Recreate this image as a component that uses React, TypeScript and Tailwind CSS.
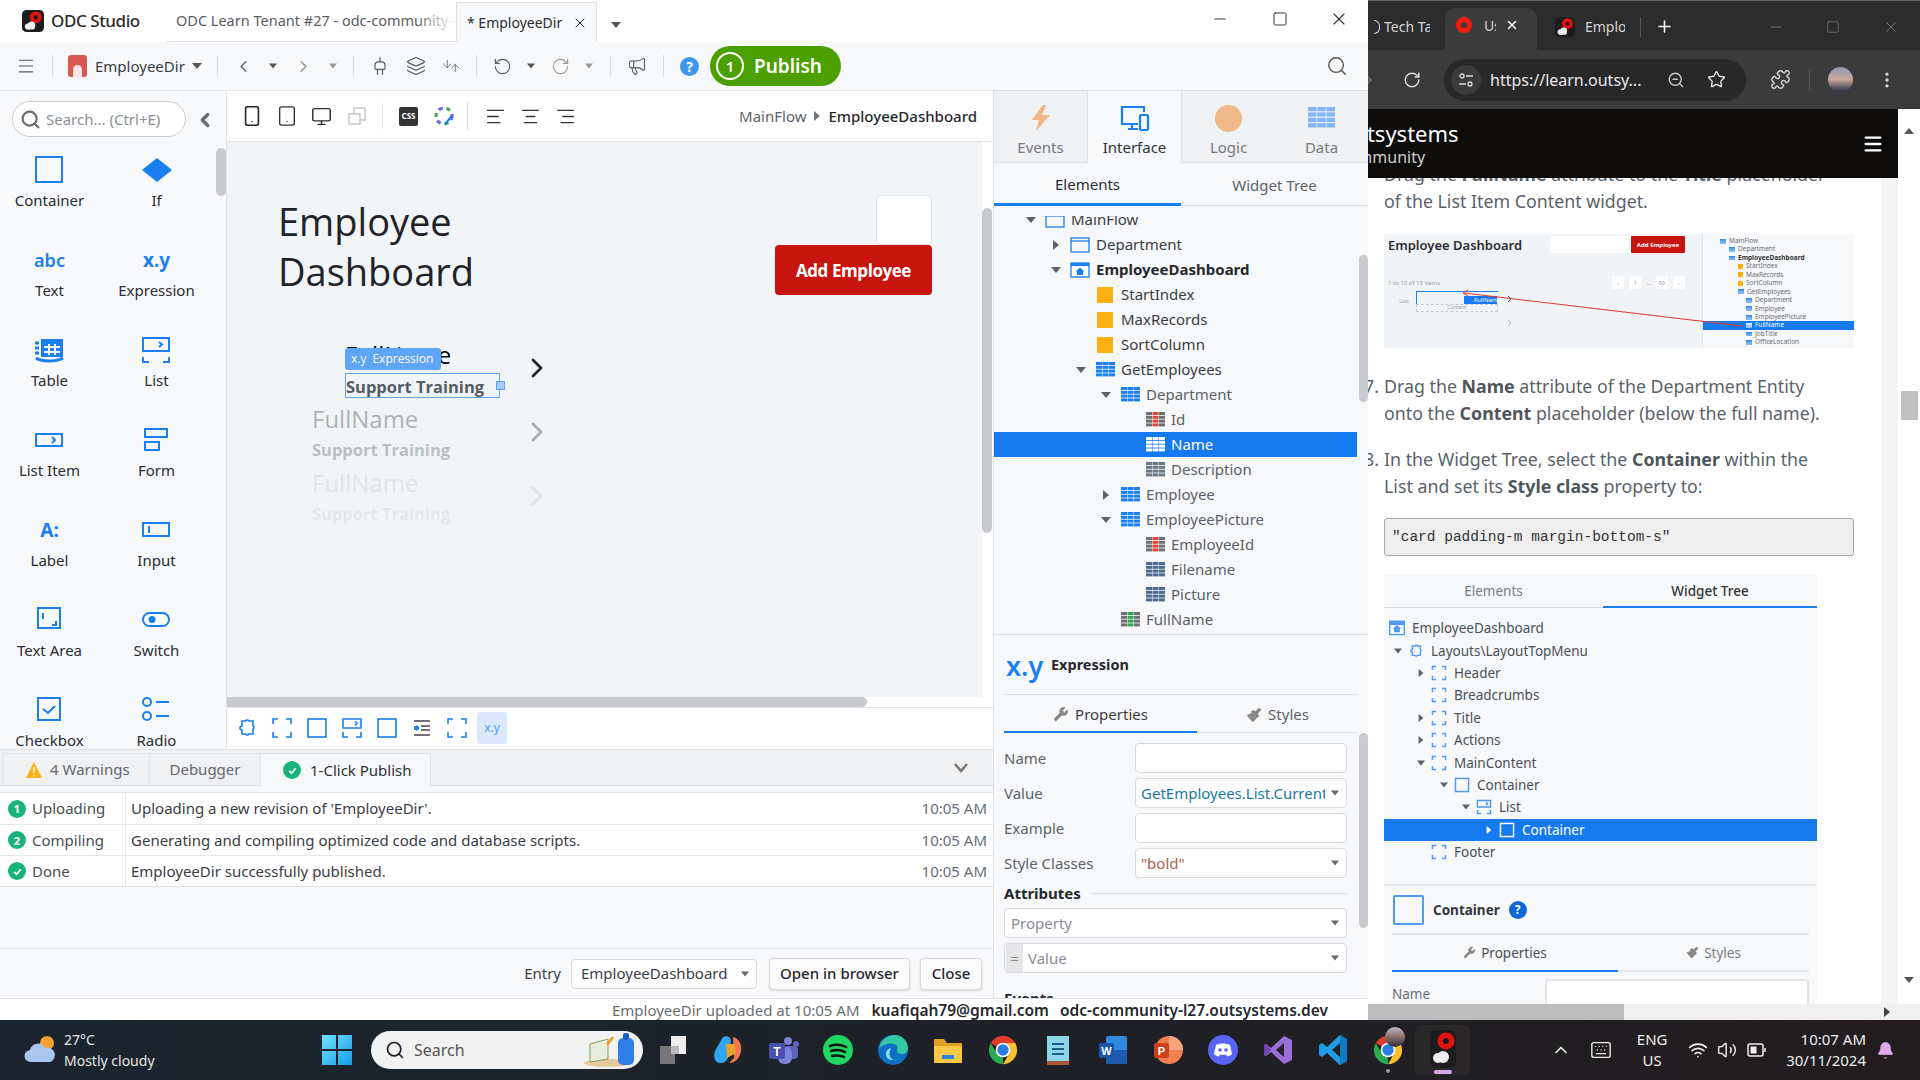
import type { ReactNode } from "react";
import {
  AlignCenter, AlignLeft, AlignRight, ArrowDown, ArrowRight, ArrowUp, Bell, ChevronLeft, ChevronRight, ChevronUp,
  Keyboard, Layers, Megaphone, Menu, Minus, Monitor, MoreVertical, Paintbrush, Plug, Plus, Puzzle,
  RotateCcw, RotateCw, Search, Smartphone, Square, Star, Tablet, Volume2, Wifi, Wrench, X, ZoomOut,
} from "lucide-react";

const BLUE = "#1a7ff0";

function Tri({ dir = "down", c = "#555", s = 5 }: { dir?: "down" | "right"; c?: string; s?: number }) {
  return (
    <svg width={s * 2} height={s * 2} viewBox="0 0 10 10" className="shrink-0">
      {dir === "down" ? <path d="M0 2h10L5 8z" fill={c} /> : <path d="M2 0v10l6-5z" fill={c} />}
    </svg>
  );
}

function OdcLogo({ size = 22 }: { size?: number }) {
  return (
    <svg width={size} height={size} viewBox="0 0 24 24" className="shrink-0">
      <rect width="24" height="24" rx="5" fill="#1d1d1f" />
      <circle cx="15" cy="8" r="6.5" fill="#e0140f" />
      <circle cx="15" cy="8" r="2.4" fill="#1d1d1f" />
      <circle cx="6.5" cy="18" r="3.4" fill="#eee" />
      <circle cx="10.5" cy="16.5" r="4" fill="#eee" />
      <rect x="5" y="17" width="9" height="4.4" rx="2" fill="#eee" />
    </svg>
  );
}

function Chrome({ size = 34 }: { size?: number }) {
  return (
    <svg width={size} height={size} viewBox="0 0 24 24">
      <path d="M3.34 7A10 10 0 0 1 20.66 7H12A5 5 0 0 0 7.67 9.5Z" fill="#e33b2e" />
      <path d="M20.66 7A10 10 0 0 1 12 22L16.33 14.5A5 5 0 0 0 12 7Z" fill="#fbc02d" />
      <path d="M12 22A10 10 0 0 1 3.34 7L7.67 14.5A5 5 0 0 0 12 17Z" fill="#2da94f" />
      <circle cx="12" cy="12" r="5.2" fill="#fff" />
      <circle cx="12" cy="12" r="4" fill="#2a7de1" />
    </svg>
  );
}

// ---------- widget palette icons ----------
function Pal({ children }: { children: ReactNode }) {
  return (
    <svg width="36" height="30" viewBox="0 0 36 30" fill="none" stroke={BLUE} strokeWidth="2">
      {children}
    </svg>
  );
}

const PALETTE: { label: string; icon: ReactNode }[] = [
  { label: "Container", icon: <Pal><rect x="4" y="2" width="26" height="25" /></Pal> },
  { label: "If", icon: <Pal><path d="M18 3l15 12-15 12L3 15z" fill={BLUE} stroke="none" /></Pal> },
  { label: "Text", icon: <span className="text-[18px] font-semibold text-[#1a7ff0]">abc</span> },
  { label: "Expression", icon: <span className="text-[19px] font-bold text-[#1a7ff0]">x.y</span> },
  { label: "Table", icon: (
    <Pal>
      <rect x="9" y="4" width="22" height="18" fill={BLUE} stroke="none" />
      <path d="M12 12h16M12 17h16M17 9v11M23 9v11" stroke="#f6f8fa" />
      <path d="M3 8h4M3 13h4M3 18h4M4 23c6 4 20 4 27 0" strokeWidth="3" />
    </Pal>
  ) },
  { label: "List", icon: (
    <Pal>
      <rect x="4" y="3" width="26" height="13" />
      <path d="M20 7l3 2.500-3 2.500M4 22v5h6M30 22v5h-6" />
    </Pal>
  ) },
  { label: "List Item", icon: <Pal><rect x="4" y="9" width="26" height="12" /><path d="M20 12l3 3-3 3" /></Pal> },
  { label: "Form", icon: <Pal><rect x="6" y="4" width="22" height="8" /><rect x="6" y="17" width="14" height="8" /></Pal> },
  { label: "Label", icon: <span className="text-[19px] font-bold text-[#1a7ff0]">A:</span> },
  { label: "Input", icon: <Pal><rect x="4" y="8" width="26" height="13" /><path d="M10 11v7" /></Pal> },
  { label: "Text Area", icon: <Pal><rect x="6" y="3" width="22" height="20" /><path d="M11 8v6M24 16v4h-4" /></Pal> },
  { label: "Switch", icon: <Pal><rect x="4" y="8" width="26" height="13" rx="6.500" /><circle cx="13" cy="14.500" r="3.500" fill={BLUE} stroke="none" /></Pal> },
  { label: "Checkbox", icon: <Pal><rect x="6" y="3" width="22" height="22" /><path d="M11 14l5 4 7-7" /></Pal> },
  { label: "Radio", icon: <Pal><circle cx="8" cy="7" r="4" /><circle cx="8" cy="21" r="4" /><path d="M17 7h13M17 21h13" /></Pal> },
];

function Palette() {
  return (
    <aside className="relative flex w-[227px] shrink-0 flex-col overflow-hidden border-r border-[#e0e2e5] bg-[#f6f8fa]">
      <div className="flex h-[59px] shrink-0 items-start pl-[12px] pt-[10px]">
        <div className="flex h-[36px] w-[174px] items-center gap-[5px] rounded-full border border-[#c9cbcf] bg-white pl-[7px] text-[15px] text-[#8b8f94]">
          <Search size={21} strokeWidth={2.5} className="text-[#6e6e6e]" />
          <span className="whitespace-nowrap">Search... (Ctrl+E)</span>
        </div>
        <ChevronLeft size={22} strokeWidth={3.5} className="ml-[8px] mt-[8px] text-[#666a6e]" />
      </div>
      <div className="-ml-[4px] grid grid-cols-[107px_107px]">
        {PALETTE.map((p) => (
          <div key={p.label} className="flex h-[90px] flex-col items-center">
            <div className="flex h-[40px] items-center justify-center">{p.icon}</div>
            <div className="h-[22px] text-[15px] leading-[20px] text-[#2b2d33]">{p.label}</div>
          </div>
        ))}
      </div>
      <div className="absolute right-0 top-[57px] h-[48px] w-[10px] rounded-full bg-[#c9cacd]" />
    </aside>
  );
}

// ---------- canvas ----------
function WidgetToolbarIcon({ children }: { children: ReactNode }) {
  return (
    <div className="flex h-[30px] w-[30px] shrink-0 items-center justify-center">
      <svg width="22" height="22" viewBox="0 0 22 22" fill="none" stroke={BLUE} strokeWidth="1.600">{children}</svg>
    </div>
  );
}

const DASHED = "M2 7V2h5M15 2h5v5M20 15v5h-5M7 20H2v-5";
const PUZZLE = "M6 4h3.500a2 2 0 0 1 3.500 0h4v4.500a2 2 0 0 1 0 3.500V17h-4a2 2 0 0 1-3.500 0H6v-4a2 2 0 0 1 0-4z";

function ListRow({ selected, fade }: { selected?: boolean; fade: string }) {
  return (
    <div className={`relative flex h-[64px] items-start justify-between ${fade}`}>
      <div className={selected ? "pl-[33px]" : ""}>
        <div className={`h-[34px] text-[24px] leading-[32px] ${selected ? "text-black" : "text-[#333]"}`}>FullName</div>
        <div className={`h-[25px] text-[16.500px] font-bold leading-[25px] text-[#555b63] ${selected ? "w-[155px] border border-[#5ea4f7] leading-[23px]" : ""}`}>
          Support Training
        </div>
      </div>
      <ChevronRight size={32} strokeWidth={2} className="mr-[-8px] mt-[13px] text-[#222]" />
      {selected && (
        <>
          <div className="absolute left-[33px] top-[9px] flex h-[22px] w-[96px] items-center gap-[6px] rounded-[3px] bg-[#5ea4f7] pl-[6px] text-[12px] text-white">
            <span>x.y</span>
            <span>Expression</span>
          </div>
          <div className="absolute left-[184px] top-[42px] h-[9px] w-[9px] border border-[#5ea4f7] bg-[#a9cdf9]" />
        </>
      )}
    </div>
  );
}

function CanvasColumn() {
  return (
    <div className="flex min-w-0 flex-1 flex-col bg-white">
      <div className="flex h-[51px] shrink-0 items-center border-b border-[#e0e2e5] pl-[7px] pr-[16px]">
        <div className="flex w-[35px] justify-center"><Smartphone size={22} strokeWidth={1.7} className="text-[#222]" /></div>
        <div className="flex w-[35px] justify-center"><Tablet size={22} strokeWidth={1.5} className="text-[#333]" /></div>
        <div className="flex w-[35px] justify-center"><Monitor size={21} strokeWidth={1.7} className="text-[#333]" /></div>
        <div className="flex w-[35px] justify-center">
          <svg width="20" height="20" viewBox="0 0 20 20" fill="none" stroke="#c4c6c9" strokeWidth="1.500"><path d="M7 8V2h11v12h-5" /><rect x="2" y="8" width="11" height="10" /></svg>
        </div>
        <div className="mx-[8px] h-[26px] w-px bg-[#e0e2e5]" />
        <div className="ml-[8px] flex h-[19px] w-[19px] items-center justify-center rounded-[2px] bg-[#333] text-[8px] font-bold text-white">CSS</div>
        <svg width="22" height="22" viewBox="0 0 22 22" className="ml-[15px]" fill="none" strokeWidth="3">
          <circle cx="11" cy="11" r="8" stroke="#34a853" strokeDasharray="4 4" />
          <circle cx="11" cy="11" r="8" stroke="#7b61ff" strokeDasharray="4 12" />
          <path d="M12 19l7-8" stroke="#1a7ff0" strokeWidth="2" />
        </svg>
        <div className="ml-[12px] h-[26px] w-px bg-[#d5d7da]" />
        <AlignLeft size={21} strokeWidth={1.5} className="ml-[17px] text-[#333]" />
        <AlignCenter size={21} strokeWidth={1.5} className="ml-[14px] text-[#333]" />
        <AlignRight size={21} strokeWidth={1.5} className="ml-[14px] text-[#333]" />
        <div className="ml-auto flex items-center gap-[6px] text-[15px]">
          <span className="text-[#5f6368]">MainFlow</span>
          <Tri dir="right" c="#777" s={5} />
          <span className="font-medium text-[#26282c]">EmployeeDashboard</span>
        </div>
      </div>

      <div className="flex min-h-0 flex-1">
        <div className="flex min-w-0 flex-1 flex-col">
          <div className="min-h-0 flex-1 overflow-hidden bg-[#f2f5f8] pl-[51px] pr-[50px] font-['Open_Sans',sans-serif]">
            <div className="flex items-start justify-between">
              <h1 className="pt-[54px] text-[38px] font-medium leading-[50px] text-[#1f2329]">
                Employee
                <br />
                Dashboard
              </h1>
              <div className="mt-[53px] flex w-[157px] flex-col items-end">
                <div className="h-[50px] w-[56px] rounded-[4px] border border-[#dfe2e5] bg-white" />
                <div className="flex h-[50px] w-[157px] items-center justify-center rounded-[4px] bg-[#c8140f] pt-[1px] text-[17px] font-bold tracking-tight text-white">
                  Add Employee
                </div>
              </div>
            </div>
            <div className="ml-[34px] mt-[43px] w-[233px]">
              <ListRow selected fade="" />
              <ListRow fade="opacity-35" />
              <ListRow fade="opacity-[0.08]" />
            </div>
          </div>
          <div className="h-[10px] shrink-0 bg-white">
            <div className="h-[10px] w-[640px] rounded-r-full bg-[#c9cacd]" />
          </div>
        </div>
        <div className="w-[11px] shrink-0 bg-white pt-[66px]">
          <div className="h-[325px] w-[10px] rounded-full bg-[#c9cacd]" />
        </div>
      </div>

      <div className="flex h-[42px] shrink-0 items-center gap-[5px] border-t border-[#e0e2e5] pb-[2px] pl-[5px]">
        <WidgetToolbarIcon><path d={PUZZLE} /></WidgetToolbarIcon>
        <WidgetToolbarIcon><path d={DASHED} /></WidgetToolbarIcon>
        <WidgetToolbarIcon><rect x="2" y="2" width="18" height="18" /></WidgetToolbarIcon>
        <WidgetToolbarIcon><path d="M2 2h18v9H2zM14 4.500l2 2-2 2M2 15v5h5M20 15v5h-5" /></WidgetToolbarIcon>
        <WidgetToolbarIcon><rect x="2" y="2" width="18" height="18" /></WidgetToolbarIcon>
        <WidgetToolbarIcon><path d="M3 4h16M10 9h9M10 13h9M3 18h16" stroke="#444" /><circle cx="5.500" cy="11" r="2.500" fill={BLUE} stroke="none" /></WidgetToolbarIcon>
        <WidgetToolbarIcon><path d={DASHED} /></WidgetToolbarIcon>
        <div className="flex h-[32px] w-[30px] items-center justify-center rounded-[3px] bg-[#dbe9fb] text-[12px] text-[#4e9bf3]">x.y</div>
      </div>
    </div>
  );
}

// ---------- bottom panel ----------
function Dot({ children }: { children: ReactNode }) {
  return (
    <span className="flex h-[18px] w-[18px] shrink-0 items-center justify-center rounded-full bg-[#19b47a] text-[11px] font-bold leading-none text-white">
      {children}
    </span>
  );
}

const Check = () => (
  <svg width="11" height="11" viewBox="0 0 12 12" fill="none" stroke="#fff" strokeWidth="1.800"><path d="M2.500 6.500l2.500 2.500 4.500-5.500" /></svg>
);

const LOG_ROWS: { dot: ReactNode; step: string; text: string }[] = [
  { dot: "1", step: "Uploading", text: "Uploading a new revision of 'EmployeeDir'." },
  { dot: "2", step: "Compiling", text: "Generating and compiling optimized code and database scripts." },
  { dot: <Check />, step: "Done", text: "EmployeeDir successfully published." },
];

function BottomPanel() {
  return (
    <div className="flex h-[248px] shrink-0 flex-col bg-[#f6f8fa] text-[15px]">
      <div className="flex h-[36px] shrink-0 items-end border-b border-[#dfe1e4] bg-[#f0f1f3] pl-[2px]">
        <div className="flex h-[32px] w-[148px] items-center gap-[7px] border-t border-r border-l border-[#e4e6e8] pl-[22px] text-[#64686d]">
          <svg width="18" height="18" viewBox="0 0 18 18"><path d="M9 1l8 16H1z" fill="#ffb20f" /><path d="M9 6v6M9 14v1.500" stroke="#fff" strokeWidth="1.500" /></svg>
          4 Warnings
        </div>
        <div className="flex h-[32px] w-[111px] items-center justify-center border-t border-r border-[#e4e6e8] text-[#64686d]">Debugger</div>
        <div className="-mb-px flex h-[33px] w-[170px] items-center gap-[9px] border-t border-r border-[#dfe1e4] bg-[#f6f8fa] pl-[22px] text-[#2f3237]">
          <Dot><Check /></Dot>
          1-Click Publish
        </div>
        <svg width="16" height="16" viewBox="0 0 16 16" fill="none" stroke="#777" strokeWidth="2.500" className="mb-[9px] ml-[522px]"><path d="M2 4l6 7 6-7" /></svg>
      </div>
      <div className="mt-[6px] border-t border-b border-[#dfe1e4] bg-white">
        {LOG_ROWS.map((r, i) => (
          <div key={r.step} className={`flex h-[31px] items-center ${i > 0 ? "border-t border-[#e4e6e8]" : ""}`}>
            <div className="flex h-full w-[126px] shrink-0 items-center gap-[6px] border-r border-[#e4e6e8] pl-[8px] text-[#4a4e54]">
              <Dot>{r.dot}</Dot>
              {r.step}
            </div>
            <div className="pl-[5px] text-[#3c4046]">{r.text}</div>
            <div className="ml-auto pr-[6px] text-[#6a6e73]">10:05 AM</div>
          </div>
        ))}
      </div>
      <div className="mt-auto flex h-[50px] shrink-0 items-center justify-end border-t border-[#e0e2e5] pr-[11px]">
        <span className="mr-[10px] text-[#3c4046]">Entry</span>
        <div className="flex h-[30px] w-[186px] items-center justify-between rounded-[4px] border border-[#d8dadd] bg-white pl-[9px] pr-[7px] text-[#3c4046]">
          EmployeeDashboard
          <Tri c="#666" s={4} />
        </div>
        <div className="ml-[12px] flex h-[32px] w-[141px] items-center justify-center rounded-[4px] border border-[#d8dadd] bg-[#fbfbfc] font-medium text-[#26282c] shadow-sm">Open in browser</div>
        <div className="ml-[10px] flex h-[32px] w-[62px] items-center justify-center rounded-[4px] border border-[#d8dadd] bg-[#fbfbfc] font-medium text-[#26282c] shadow-sm">Close</div>
      </div>
    </div>
  );
}

// ---------- right panel ----------
function GridIcon({ c = BLUE, mid, w = 19 }: { c?: string; mid?: string; w?: number }) {
  return (
    <svg width={w} height={(w * 15) / 19} viewBox="0 0 19 15" className="shrink-0">
      {[0, 1, 2, 3].flatMap((r) =>
        [0, 1, 2].map((k) => (
          <rect key={`${r}-${k}`} x={k * 6.5} y={r * 3.8} width="6" height="3" fill={k === 1 && mid ? mid : c} />
        ))
      )}
    </svg>
  );
}

const FolderIcon = () => (
  <svg width="20" height="16" viewBox="0 0 20 16" fill="none" stroke={BLUE} strokeWidth="1.300" className="shrink-0"><rect x="1" y="1" width="18" height="14" /><path d="M1 4h18" /></svg>
);
const HomeIcon = () => (
  <svg width="20" height="16" viewBox="0 0 20 16" className="shrink-0"><rect x="1" y="1" width="18" height="14" fill="#fff" stroke={BLUE} strokeWidth="1.300" /><path d="M1 1h18v3H1z" fill={BLUE} /><path d="M10 5.500l4.500 4h-1.500v3.500H7V9.500H5.500z" fill={BLUE} /></svg>
);
const VarIcon = () => <div className="h-[16px] w-[16px] shrink-0 bg-[#ffb20f]" />;

const PAD = ["pl-[30px]", "pl-[55px]", "pl-[80px]", "pl-[105px]", "pl-[130px]"];

const TREE: { lv: number; arrow?: "down" | "right"; icon: ReactNode; label: string; bold?: boolean; dim?: boolean; sel?: boolean }[] = [
  { lv: 0, arrow: "down", icon: <FolderIcon />, label: "MainFlow" },
  { lv: 1, arrow: "right", icon: <FolderIcon />, label: "Department" },
  { lv: 1, arrow: "down", icon: <HomeIcon />, label: "EmployeeDashboard", bold: true },
  { lv: 2, icon: <VarIcon />, label: "StartIndex" },
  { lv: 2, icon: <VarIcon />, label: "MaxRecords" },
  { lv: 2, icon: <VarIcon />, label: "SortColumn" },
  { lv: 2, arrow: "down", icon: <GridIcon />, label: "GetEmployees" },
  { lv: 3, arrow: "down", icon: <GridIcon />, label: "Department", dim: true },
  { lv: 4, icon: <GridIcon c="#6d6f73" mid="#e0483b" />, label: "Id", dim: true },
  { lv: 4, icon: <GridIcon c="#fff" />, label: "Name", sel: true },
  { lv: 4, icon: <GridIcon c="#6d7785" />, label: "Description", dim: true },
  { lv: 3, arrow: "right", icon: <GridIcon />, label: "Employee", dim: true },
  { lv: 3, arrow: "down", icon: <GridIcon />, label: "EmployeePicture", dim: true },
  { lv: 4, icon: <GridIcon c="#6d6f73" mid="#e0483b" />, label: "EmployeeId", dim: true },
  { lv: 4, icon: <GridIcon c="#4b6a94" />, label: "Filename", dim: true },
  { lv: 4, icon: <GridIcon c="#4b6a94" />, label: "Picture", dim: true },
  { lv: 3, icon: <GridIcon c="#6d6f73" mid="#2fa84f" />, label: "FullName", dim: true },
];

function Field({ label, value, valueClass, caret }: { label: string; value?: string; valueClass?: string; caret?: boolean }) {
  return (
    <div className="mb-[5px] flex h-[30px] items-center">
      <div className="w-[131px] shrink-0 text-[#5d6166]">{label}</div>
      <div className="flex h-[30px] w-[212px] items-center justify-between overflow-hidden rounded-[4px] border border-[#d8dadd] bg-white pl-[5px] pr-[7px]">
        <span className={`w-[184px] overflow-hidden whitespace-nowrap ${valueClass ?? ""}`}>{value}</span>
        {caret && <Tri c="#666" s={4} />}
      </div>
    </div>
  );
}

function RightTab({ label, active, children }: { label: string; active?: boolean; children: ReactNode }) {
  return (
    <div className={`flex flex-1 flex-col items-center border-b border-[#e0e2e5] pt-[12px] ${active ? "border-x border-b-0 bg-[#f7f8fa] text-[#30333a]" : "bg-[#f0f1f3] text-[#767a80]"}`}>
      <div className="flex h-[30px] items-center">{children}</div>
      <div className="mt-[3px] text-[15px]">{label}</div>
    </div>
  );
}

function RightPanel() {
  return (
    <aside className="relative flex w-[375px] shrink-0 flex-col overflow-hidden border-l border-[#e0e2e5] bg-[#f7f8fa] text-[15px]">
      <div className="flex h-[72px] shrink-0">
        <RightTab label="Events"><svg width="22" height="28" viewBox="0 0 22 28"><path d="M13 1L2 16h7l-3 11 14-16h-8l4-10z" fill="#f2b682" /></svg></RightTab>
        <RightTab label="Interface" active>
          <svg width="30" height="27" viewBox="0 0 30 27" fill="none" stroke={BLUE} strokeWidth="2.200"><path d="M18 19H2V2h22v5M8 24h10M12 19v5" /><rect x="20" y="10" width="8" height="15" rx="1" /></svg>
        </RightTab>
        <RightTab label="Logic"><div className="h-[27px] w-[27px] rounded-full bg-[#eeb888]" /></RightTab>
        <RightTab label="Data"><GridIcon c="#83b5f5" w={27} /></RightTab>
      </div>
      <div className="flex h-[43px] shrink-0 border-b border-[#dfe1e4]">
        <div className="-mb-px flex w-[187px] items-center justify-center border-b-[3px] border-[#1a7ff0] pt-[3px] text-[#2b2d33]">Elements</div>
        <div className="flex flex-1 items-center justify-center pt-[3px] text-[#5f6368]">Widget Tree</div>
      </div>
      <div className="relative mt-[10px] h-[419px] shrink-0 overflow-hidden border-b border-[#dfe1e4]">
        <div className="-mt-[9px] -translate-x-[1px]">
          {TREE.map((t, i) => (
            <div
              key={i}
              className={`flex h-[25px] items-center ${PAD[t.lv]} ${t.sel ? "mr-[10px] bg-[#1579f0] text-white" : t.dim ? "mr-[10px] text-[#5c6167]" : "mr-[10px] text-[#3a3d43]"}`}
            >
              <div className="flex w-[16px] shrink-0 justify-center">{t.arrow && <Tri dir={t.arrow} c="#5f6265" s={5} />}</div>
              <div className="ml-[6px] flex w-[20px] shrink-0 justify-center">{t.icon}</div>
              <span className={`ml-[6px] ${t.bold ? "font-bold text-[#26282c]" : ""}`}>{t.label}</span>
            </div>
          ))}
        </div>
        <div className="absolute right-0 top-[39px] h-[147px] w-[9px] rounded-full bg-[#c9cacd]" />
      </div>

      <div className="flex h-[59px] shrink-0 items-center pl-[12px] pt-[1px]">
        <span className="w-[45px] text-[27px] font-semibold leading-none text-[#1a7ff0]">x.y</span>
        <span className="text-[14.500px] font-bold text-[#26282c]">Expression</span>
      </div>
      <div className="mx-[10px] flex h-[39px] shrink-0 border-t border-b border-[#dfe1e4] pt-[2px]">
        <div className="-mb-px flex w-[193px] items-center justify-center gap-[6px] border-b-[2px] border-[#1a7ff0] text-[#3a3d43]">
          <Wrench size={16} fill="#888" strokeWidth={1} className="text-[#888]" />
          Properties
        </div>
        <div className="flex flex-1 items-center justify-center gap-[6px] text-[#5f6368]">
          <Paintbrush size={16} fill="#888" strokeWidth={1} className="text-[#888]" />
          Styles
        </div>
      </div>
      <div className="relative flex-1 px-[10px] pt-[10px]">
        <Field label="Name" />
        <Field label="Value" value="GetEmployees.List.Current" valueClass="text-[#1b7aa0]" caret />
        <Field label="Example" />
        <Field label="Style Classes" value={'"bold"'} valueClass="text-[#b0604f]" caret />
        <div className="mt-[5px] flex h-[20px] items-center gap-[10px] font-bold text-[#26282c]">
          Attributes
          <div className="h-px w-[257px] bg-[#dfe1e4]" />
        </div>
        <div className="mt-[5px] flex h-[30px] w-[343px] items-center justify-between rounded-[4px] border border-[#d8dadd] bg-white pl-[6px] pr-[7px] text-[#8a8e93]">
          Property
          <Tri c="#666" s={4} />
        </div>
        <div className="mt-[5px] flex h-[30px] w-[343px] items-center justify-between overflow-hidden rounded-[4px] border border-[#d8dadd] bg-white pr-[7px] text-[#8a8e93]">
          <span className="flex items-center">
            <span className="ml-[1px] flex h-[28px] w-[17px] items-center justify-center bg-[#e4e5e7] text-[#888]">=</span>
            <span className="ml-[5px]">Value</span>
          </span>
          <Tri c="#666" s={4} />
        </div>
        <div className="mt-[15px] flex h-[20px] items-center gap-[10px] font-bold text-[#26282c]">
          Events
          <div className="h-px flex-1 bg-[#dfe1e4]" />
        </div>
        <div className="absolute right-0 top-0 h-[195px] w-[9px] rounded-full bg-[#c9cacd]" />
      </div>
    </aside>
  );
}

// ---------- studio ----------
function Slot({ w, children }: { w: string; children: ReactNode }) {
  return <div className={`flex shrink-0 items-center justify-center ${w}`}>{children}</div>;
}
const Sep = () => <div className="h-[22px] w-px shrink-0 bg-[#d9dbde]" />;

function Studio() {
  return (
    <div className="flex w-[1368px] shrink-0 flex-col overflow-hidden bg-white font-['Noto_Sans',sans-serif]">
      <div className="flex h-[42px] shrink-0 items-end">
        <div className="flex h-[42px] w-[166px] shrink-0 items-center pl-[22px]">
          <OdcLogo />
          <span className="ml-[7px] text-[17px] font-medium tracking-tight text-[#2c2c2c]">ODC Studio</span>
        </div>
        <div className="relative flex h-[42px] w-[290px] items-center overflow-hidden whitespace-nowrap border-b border-[#dfe1e4] pl-[10px] text-[14.500px] text-[#5a5d62]">
          ODC Learn Tenant #27 - odc-community-l27
          <div className="absolute right-0 top-0 h-full w-[40px] bg-gradient-to-r from-transparent to-white" />
        </div>
        <div className="flex h-[40px] w-[141px] items-center gap-[10px] border-x border-t border-[#dfe1e4] bg-[#f6f8fa] pl-[10px] text-[14px] text-[#2b2d33]">
          * EmployeeDir
          <X size={16} strokeWidth={1.5} />
        </div>
        <div className="mb-[12px] ml-[14px]"><Tri c="#555" s={5} /></div>
        <div className="ml-auto flex h-[42px] items-center pb-[4px] text-[#333]">
          <Slot w="w-[60px]"><Minus size={18} strokeWidth={1.3} /></Slot>
          <Slot w="w-[60px]"><Square size={16} strokeWidth={1.5} /></Slot>
          <Slot w="w-[58px]"><X size={20} strokeWidth={1.3} /></Slot>
        </div>
      </div>

      <div className="flex h-[49px] shrink-0 items-center border-b border-[#e0e2e5] bg-[#f6f8fa] text-[#55585c]">
        <Slot w="w-[52px]"><Menu size={20} strokeWidth={1.3} /></Slot>
        <Sep />
        <div className="ml-[15px] flex h-[22px] w-[19px] shrink-0 items-end justify-center rounded-[3px] bg-[#d9584f]">
          <div className="h-[12px] w-[9px] rounded-t-full bg-[#f7e6e3]" />
        </div>
        <span className="ml-[8px] w-[97px] shrink-0 text-[15px] text-[#3a3d43]">EmployeeDir</span>
        <Tri c="#555" s={5} />
        <div className="ml-[15px]"><Sep /></div>
        <Slot w="w-[51px]"><ChevronLeft size={19} strokeWidth={1.5} /></Slot>
        <Tri c="#555" s={4} />
        <Slot w="w-[52px]"><ChevronRight size={19} strokeWidth={1.5} className="text-[#888]" /></Slot>
        <Tri c="#999" s={4} />
        <Slot w="w-[16px]"><span /></Slot>
        <Sep />
        <Slot w="w-[52px]"><Plug size={20} strokeWidth={1.4} className="rotate-180" /></Slot>
        <Slot w="w-[20px]"><Layers size={20} strokeWidth={1.4} /></Slot>
        <div className="ml-[17px] flex w-[18px]"><ArrowDown size={14} strokeWidth={1.5} className="-ml-[2px]" /><ArrowUp size={14} strokeWidth={1.5} className="-ml-[5px] mt-[4px]" /></div>
        <Slot w="w-[15px]"><span /></Slot>
        <Sep />
        <Slot w="w-[50px]"><RotateCcw size={19} strokeWidth={1.4} /></Slot>
        <Tri c="#555" s={4} />
        <Slot w="w-[50px]"><RotateCw size={19} strokeWidth={1.4} className="text-[#999]" /></Slot>
        <Tri c="#999" s={4} />
        <Slot w="w-[17px]"><span /></Slot>
        <Sep />
        <Slot w="w-[52px]"><Megaphone size={20} strokeWidth={1.3} /></Slot>
        <Sep />
        <div className="ml-[16px] flex h-[19px] w-[19px] shrink-0 items-center justify-center rounded-full bg-[#3f97ef] text-[14px] font-bold text-white">?</div>
        <div className="ml-[11px] flex h-[40px] w-[131px] shrink-0 items-center rounded-full bg-[#4ba000] pl-[6px] text-[19px] font-semibold text-white">
          <span className="flex h-[28px] w-[28px] items-center justify-center rounded-full border-2 border-white text-[15px]">1</span>
          <span className="ml-[10px]">Publish</span>
        </div>
        <Search size={22} strokeWidth={1.5} className="ml-auto mr-[20px] text-[#555]" />
      </div>

      <div className="flex min-h-0 flex-1">
        <div className="flex w-[993px] shrink-0 flex-col">
          <div className="flex min-h-0 flex-1">
            <Palette />
            <CanvasColumn />
          </div>
          <div className="border-t border-[#e0e2e5]" />
          <BottomPanel />
        </div>
        <RightPanel />
      </div>

      <div className="flex h-[22px] shrink-0 items-center justify-end border-t border-[#e0e2e5] bg-white pr-[40px] text-[15px] leading-[18px]">
        <span className="text-[#6a6e73]">EmployeeDir uploaded at 10:05 AM</span>
        <span className="ml-[12px] text-[15.500px] font-semibold text-[#26282c]">kuafiqah79@gmail.com</span>
        <span className="ml-[11px] text-[15.500px] font-semibold text-[#26282c]">odc-community-l27.outsystems.dev</span>
      </div>
    </div>
  );
}

// ---------- browser ----------
const MINI_TREE: { t: string; lv: number; kind?: string }[] = [
  { t: "MainFlow", lv: 0 },
  { t: "Department", lv: 1 },
  { t: "EmployeeDashboard", lv: 1, kind: "bold" },
  { t: "StartIndex", lv: 2, kind: "var" },
  { t: "MaxRecords", lv: 2, kind: "var" },
  { t: "SortColumn", lv: 2, kind: "var" },
  { t: "GetEmployees", lv: 2, kind: "grid" },
  { t: "Department", lv: 3, kind: "grid" },
  { t: "Employee", lv: 3, kind: "grid" },
  { t: "EmployeePicture", lv: 3, kind: "grid" },
  { t: "FullName", lv: 3, kind: "sel" },
  { t: "JobTitle", lv: 3, kind: "grid" },
  { t: "OfficeLocation", lv: 3, kind: "grid" },
];
const MINI_PAD = ["pl-[17px]", "pl-[26px]", "pl-[35px]", "pl-[43px]"];

function DragScreenshot() {
  return (
    <div className="relative mt-[19px] flex h-[114px] w-[470px] overflow-hidden bg-[#f1f4f7]">
      <div className="w-[319px] shrink-0 border-r border-[#e1e3e6]">
        <div className="flex h-[20px] items-center pl-[4px] pr-[17px] pt-[1px]">
          <span className="text-[13px] font-semibold leading-[18px] text-[#2b2d33]">Employee Dashboard</span>
          <div className="ml-auto h-[17px] w-[81px] bg-white" />
          <div className="flex h-[17px] w-[54px] items-center justify-center rounded-[1px] bg-[#c8140f] text-[6px] font-bold leading-none text-white">Add Employee</div>
        </div>
        <div className="mt-[22px] flex h-[13px] items-center pl-[4px] pr-[17px] text-[6px] leading-none text-[#9a9da1]">
          1 to 10 of 15 items
          <div className="ml-auto flex items-center gap-[5px]">
            <span className="flex h-[13px] w-[12px] items-center justify-center bg-white">‹</span>
            <span className="flex h-[13px] w-[12px] items-center justify-center bg-white">1</span>
            <span>...</span>
            <span className="flex h-[13px] w-[12px] items-center justify-center bg-white">50</span>
            <span className="flex h-[13px] w-[12px] items-center justify-center bg-white">›</span>
          </div>
        </div>
        <div className="ml-[8px] mt-[2px] flex items-start text-[5px] leading-none text-[#a5a8ab]">
          <span className="mt-[8px] w-[24px] text-center">Last</span>
          <div className="w-[82px]">
            <div className="h-[13px] border-t border-l border-[#1a7ff0]" />
            <div className="h-[8px] border border-dashed border-[#c8cacd] text-center">Content</div>
          </div>
        </div>
      </div>
      <div className="flex-1 bg-[#f6f8fa] text-[6.500px] leading-[8.450px] text-[#6a6e73]">
        <div className="pt-[3px]">
          {MINI_TREE.map((r, i) => (
            <div key={i} className={`flex h-[8.450px] items-center gap-[3px] ${MINI_PAD[r.lv]} ${r.kind === "sel" ? "bg-[#1579f0] text-white" : ""} ${r.kind === "bold" ? "font-bold text-[#333]" : ""}`}>
              {r.kind === "var" ? <div className="h-[5px] w-[5px] bg-[#ffb20f]" /> : <GridIcon w={6} c={r.kind === "sel" ? "#fff" : BLUE} />}
              {r.t}
            </div>
          ))}
        </div>
      </div>
      <div className="absolute left-[80px] top-[62px] flex h-[8px] w-[33px] items-center bg-[#1579f0] pl-[10px] text-[6px] text-white">FullName</div>
      <svg width="470" height="114" viewBox="0 0 470 114" className="absolute left-0 top-0" fill="none">
        <path d="M80 59L358 92" stroke="#e5392c" strokeWidth="1" />
        <path d="M84 56l-5 3 5 3" stroke="#e5392c" strokeWidth="1" />
        <path d="M124 62l3 3-3 3" stroke="#555" />
        <path d="M124 86l3 3-3 3" stroke="#bbb" />
      </svg>
    </div>
  );
}

type MiniRow = { t: string; pad: string; arrow?: "down" | "right"; icon: "home" | "puzzle" | "dash" | "box" | "list"; sel?: boolean };
const WT: MiniRow[] = [
  { t: "EmployeeDashboard", pad: "-ml-[16px]", icon: "home" },
  { t: "Layouts\\LayoutTopMenu", pad: "pl-[3px]", arrow: "down", icon: "puzzle" },
  { t: "Header", pad: "pl-[26px]", arrow: "right", icon: "dash" },
  { t: "Breadcrumbs", pad: "pl-[26px]", icon: "dash" },
  { t: "Title", pad: "pl-[26px]", arrow: "right", icon: "dash" },
  { t: "Actions", pad: "pl-[26px]", arrow: "right", icon: "dash" },
  { t: "MainContent", pad: "pl-[26px]", arrow: "down", icon: "dash" },
  { t: "Container", pad: "pl-[49px]", arrow: "down", icon: "box" },
  { t: "List", pad: "pl-[71px]", arrow: "down", icon: "list" },
  { t: "Container", pad: "pl-[94px]", arrow: "right", icon: "box", sel: true },
  { t: "Footer", pad: "pl-[26px]", icon: "dash" },
];

function WtIcon({ kind, sel }: { kind: MiniRow["icon"]; sel?: boolean }) {
  const c = sel ? "#fff" : "#4e9bf3";
  return (
    <svg width="16" height="16" viewBox="0 0 22 22" fill="none" stroke={c} strokeWidth="2" className="shrink-0">
      {kind === "home" && <><rect x="1" y="2" width="20" height="18" fill="#fff" /><path d="M1 2h20v4H1z" fill={c} /><path d="M11 7l6 5h-2v5H7v-5H5z" fill={c} stroke="none" /></>}
      {kind === "puzzle" && <path d={PUZZLE} />}
      {kind === "dash" && <path d={DASHED} />}
      {kind === "box" && <rect x="2" y="2" width="18" height="18" />}
      {kind === "list" && <path d="M2 2h18v9H2zM14 4.500l2 2-2 2M2 15v5h5M20 15v5h-5" />}
    </svg>
  );
}

function WidgetTreeShot() {
  return (
    <div className="mt-[19px] h-[430px] w-[433px] overflow-hidden bg-[#f6f8fa] text-[13.500px] leading-[20px] text-[#4c5056]">
      <div className="flex h-[33px] border-b border-[#dcdee1]">
        <div className="flex w-[219px] items-center justify-center text-[#7a7e83]">Elements</div>
        <div className="-mb-px flex flex-1 items-center justify-center border-b-2 border-[#1a7ff0] font-medium text-[#33363b]">Widget Tree</div>
      </div>
      <div className="overflow-hidden pt-[9px]">
        {WT.map((r, i) => (
          <div key={i} className={`flex h-[22.400px] items-center ${r.pad} ${r.sel ? "bg-[#1579f0] text-white" : ""}`}>
            <div className="flex w-[21px] shrink-0 justify-center">{r.arrow && <Tri dir={r.arrow} s={4} c={r.sel ? "#fff" : "#5f6265"} />}</div>
            <WtIcon kind={r.icon} sel={r.sel} />
            <span className="ml-[7px]">{r.t}</span>
          </div>
        ))}
      </div>
      <div className="mt-[21px] border-t-2 border-[#e6e8ea] px-[8px]">
        <div className="flex h-[49px] items-center border-b-2 border-[#e6e8ea] pl-[1px]">
          <div className="h-[30px] w-[31px] rounded-[2px] border-2 border-[#4e9bf3]" />
          <span className="ml-[9px] font-bold text-[#33363b]">Container</span>
          <span className="ml-[9px] flex h-[18px] w-[18px] items-center justify-center rounded-full bg-[#0f67d8] text-[12px] font-bold text-white">?</span>
        </div>
        <div className="flex h-[37px] border-b-2 border-[#e6e8ea]">
          <div className="-mb-[2px] flex w-[226px] items-center justify-center gap-[5px] border-b-2 border-[#1a7ff0]">
            <Wrench size={13} fill="#888" strokeWidth={1} className="text-[#888]" />
            Properties
          </div>
          <div className="flex flex-1 items-center justify-center gap-[5px] text-[#7a7e83]">
            <Paintbrush size={13} fill="#888" strokeWidth={1} className="text-[#888]" />
            Styles
          </div>
        </div>
        <div className="mt-[7px] flex">
          <span className="mt-[5px] w-[155px] text-[#6a6e73]">Name</span>
          <div className="h-[40px] w-[267px] rounded-[4px] border-2 border-[#e2e4e7] bg-white" />
        </div>
      </div>
    </div>
  );
}

function Browser() {
  return (
    <div className="flex min-w-0 flex-1 flex-col overflow-hidden bg-[#2c2c2c] font-['Noto_Sans',sans-serif]">
      <div className="relative flex h-[50px] shrink-0 items-end border-t border-[#666] text-[14px] text-[#d5d5d5]">
        <div className="mb-[13px] flex w-[77px] items-center gap-[4px] overflow-hidden whitespace-nowrap pl-[16px]">
          <span className="-ml-[10px] h-[14px] w-[6px] shrink-0 rounded-r-full border border-l-0 border-[#ddd]" />
          <span className="w-[46px] overflow-hidden">Tech Talk</span>
        </div>
        <div className="flex h-[42px] w-[92px] items-center rounded-t-[10px] bg-[#3b3b3b] pb-[8px] pl-[11px]">
          <span className="flex h-[16px] w-[16px] items-center justify-center rounded-full bg-[#f01c0c]"><span className="h-[6px] w-[6px] rounded-full bg-[#3b3b3b]" /></span>
          <span className="ml-[12px] w-[12px] overflow-hidden">Us</span>
          <X size={14} strokeWidth={2.5} className="ml-[9px] text-white" />
        </div>
        <div className="mb-[13px] ml-[18px] flex items-center">
          <OdcLogo size={20} />
          <span className="ml-[10px] w-[40px] overflow-hidden">Emplo</span>
          <div className="ml-[15px] h-[20px] w-px bg-[#555]" />
          <Plus size={19} strokeWidth={2} className="ml-[14px] text-white" />
        </div>
        <div className="mb-[14px] ml-auto flex items-center text-[#888]">
          <Slot w="w-[56px]"><Minus size={18} strokeWidth={1} /></Slot>
          <Slot w="w-[58px]"><Square size={14} strokeWidth={1} /></Slot>
          <Slot w="w-[58px]"><X size={18} strokeWidth={1} /></Slot>
        </div>
      </div>

      <div className="flex h-[59px] shrink-0 items-center bg-[#3b3b3b] text-[#d8d8d8]">
        <div className="flex w-[76px] shrink-0 items-center justify-between">
          <ArrowRight size={14} strokeWidth={2} className="-ml-[8px] text-[#777]" />
          <RotateCw size={18} strokeWidth={2} className="mr-[23px]" />
        </div>
        <div className="flex h-[42px] w-[302px] shrink-0 items-center rounded-full bg-[#282828] pl-[7px] text-[16px] text-[#e8e8e8]">
          <span className="flex h-[30px] w-[30px] items-center justify-center rounded-full bg-[#3b3b3b] text-[11px]">
            <svg width="16" height="16" viewBox="0 0 16 16" fill="none" stroke="#ddd" strokeWidth="1.300"><circle cx="4" cy="4" r="2" /><path d="M8 4h7M1 12h7" /><circle cx="12" cy="12" r="2" /></svg>
          </span>
          <span className="ml-[9px] w-[158px] whitespace-nowrap">https://learn.outsy...</span>
          <ZoomOut size={18} strokeWidth={1.7} className="ml-[19px] text-[#ccc]" />
          <Star size={19} strokeWidth={1.7} className="ml-[22px]" />
        </div>
        <Puzzle size={21} strokeWidth={1.6} className="ml-[24px]" />
        <div className="ml-[18px] h-[20px] w-px bg-[#555]" />
        <div className="ml-[18px] h-[25px] w-[25px] rounded-full bg-gradient-to-b from-[#8d98ae] via-[#c8a79b] to-[#2d3142]" />
        <MoreVertical size={20} strokeWidth={2} className="ml-[24px]" />
      </div>

      <div className="relative flex min-h-0 flex-1 bg-white">
        <div className="flex min-w-0 flex-1 overflow-hidden">
          <div className="w-[513px] shrink-0 pl-[16px] pt-[52px] text-[17.800px] leading-[27px] text-[#5b6269]">
            <p className="whitespace-nowrap">Drag the <b>FullName</b> attribute to the <b>Title</b> placeholder</p>
            <p className="whitespace-nowrap">of the List Item Content widget.</p>
            <DragScreenshot />
            <div className="mt-[25px] flex w-[455px]">
              <span className="-ml-[20px] w-[20px] shrink-0">7.</span>
              <p>Drag the <b className="text-[#4f555c]">Name</b> attribute of the Department Entity onto the <b className="text-[#4f555c]">Content</b> placeholder (below the full name).</p>
            </div>
            <div className="mt-[19px] flex w-[455px]">
              <span className="-ml-[20px] w-[20px] shrink-0">8.</span>
              <p>In the Widget Tree, select the <b className="text-[#4f555c]">Container</b> within the List and set its <b className="text-[#4f555c]">Style class</b> property to:</p>
            </div>
            <div className="mt-[18px] flex h-[38px] w-[470px] items-center rounded-[3px] border border-[#a9a9a9] bg-[#eeeeee] pl-[7px] font-['Liberation_Mono',monospace] text-[14.500px] text-[#333]">
              "card padding-m margin-bottom-s"
            </div>
            <WidgetTreeShot />
          </div>
          <div className="flex-1 bg-[#f4f6f3]" />
        </div>
        <div className="flex w-[22px] shrink-0 flex-col items-center bg-white pt-[18px]">
          <svg width="12" height="8" viewBox="0 0 12 8"><path d="M6 1l5 6H1z" fill="#555" /></svg>
          <div className="mt-[256px] h-[29px] w-[17px] bg-[#c0c0c0]" />
          <svg width="12" height="8" viewBox="0 0 12 8" className="mb-[20px] mt-auto"><path d="M6 7l5-6H1z" fill="#555" /></svg>
        </div>
        <div className="absolute left-0 top-0 flex h-[69px] w-[530px] items-center justify-between bg-[#0d0c0a] text-white">
          <div className="-ml-[28px] w-[140px]">
            <div className="whitespace-nowrap text-[22px] leading-[26px]">outsystems</div>
            <div className="whitespace-nowrap text-[16px] leading-[22px] text-[#cfcfcf]">community</div>
          </div>
          <Menu size={22} strokeWidth={2.5} className="mr-[14px]" />
        </div>
      </div>

      <div className="flex h-[16px] shrink-0 items-center bg-[#f0f0f0]">
        <div className="h-[16px] w-[256px] bg-[#bdbdbd]" />
        <div className="ml-[258px]"><Tri dir="right" c="#444" s={5} /></div>
      </div>
    </div>
  );
}

// ---------- taskbar ----------
function TaskIcon({ children, active, dot }: { children: ReactNode; active?: boolean; dot?: boolean }) {
  return (
    <div className={`relative flex h-[50px] w-[55px] shrink-0 items-center justify-center rounded-[6px] ${active ? "bg-[#2a2729]" : ""}`}>
      {children}
      {dot && <div className="absolute bottom-[2px] h-[4px] w-[4px] rounded-full bg-[#9a9a9a]" />}
      {active && <div className="absolute bottom-[1px] h-[4px] w-[18px] rounded-full bg-[#d9a5ea]" />}
    </div>
  );
}

function Taskbar() {
  return (
    <div className="flex h-[60px] shrink-0 items-center bg-gradient-to-r from-[#1a2530] via-[#1e2127] to-[#221c1e] font-['Noto_Sans',sans-serif] text-white">
      <div className="flex w-[322px] shrink-0 items-center pl-[24px]">
        <svg width="34" height="32" viewBox="0 0 34 32" className="shrink-0">
          <circle cx="23" cy="9" r="7" fill="#f5a030" />
          <path d="M7 28a6 6 0 0 1-1-12 8 8 0 0 1 15-2 7 7 0 0 1 5 14z" fill="#a9c6f0" />
        </svg>
        <div className="ml-[6px] text-[14px] leading-[21px] text-[#e6e6e6]">
          <div>27°C</div>
          <div>Mostly cloudy</div>
        </div>
      </div>
      <svg width="30" height="30" viewBox="0 0 30 30" className="shrink-0">
        <defs><linearGradient id="win" x1="0" y1="0" x2="1" y2="1"><stop offset="0" stopColor="#6fe3ff" /><stop offset="1" stopColor="#1a9ce8" /></linearGradient></defs>
        <path d="M0 0h14v14H0zM16 0h14v14H16zM0 16h14v14H0zM16 16h14v14H16z" fill="url(#win)" />
      </svg>
      <div className="ml-[19px] flex h-[38px] w-[272px] shrink-0 items-center rounded-full bg-[#f2f2f2] pl-[14px] text-[16px] text-[#555]">
        <Search size={20} strokeWidth={2} className="text-[#222]" />
        <span className="ml-[9px]">Search</span>
        <svg width="58" height="36" viewBox="0 0 58 36" className="ml-auto mr-[3px]">
          <ellipse cx="26" cy="31" rx="24" ry="4" fill="#e8c79a" />
          <path d="M8 12l18-5v20l-18 3z" fill="#e8eddc" stroke="#7aa35d" />
          <path d="M24 12l6-8 2 2-6 8z" fill="#f0a030" />
          <rect x="36" y="6" width="16" height="27" rx="5" fill="#2f7fe8" />
          <rect x="41" y="1" width="6" height="7" rx="2" fill="#1b5fc4" />
        </svg>
      </div>
      <div className="ml-[2px] flex items-center">
        <TaskIcon>
          <svg width="32" height="32" viewBox="0 0 32 32"><rect x="14" y="2" width="15" height="18" fill="#eee" /><rect x="3" y="12" width="15" height="18" fill="#777" /><rect x="14" y="12" width="8" height="8" fill="#bbb" /></svg>
        </TaskIcon>
        <TaskIcon>
          <svg width="32" height="32" viewBox="0 0 32 32"><path d="M11 3c5-2 8 1 8 4l-3 16c-1 4-4 6-8 6-5 0-7-6-5-12z" fill="#2ea6f0" /><path d="M21 3c6 1 9 8 8 14s-5 12-12 12l5-5z" fill="#f0784f" /><path d="M14 10h8l2 9-9 5z" fill="#e7a42d" /></svg>
        </TaskIcon>
        <TaskIcon>
          <svg width="32" height="32" viewBox="0 0 32 32">
            <circle cx="21" cy="7" r="4" fill="#7b83d9" /><circle cx="29" cy="10" r="3" fill="#5c64c0" />
            <rect x="17" y="12" width="14" height="13" rx="4" fill="#5c64c0" /><rect x="11" y="13" width="14" height="17" rx="6" fill="#7b83d9" />
            <rect x="2" y="9" width="16" height="16" rx="2" fill="#4a50b0" />
            <text x="10" y="22" textAnchor="middle" fontSize="12" fontWeight="700" fill="#fff" fontFamily="Liberation Sans">T</text>
          </svg>
        </TaskIcon>
        <TaskIcon>
          <svg width="32" height="32" viewBox="0 0 32 32" fill="none"><circle cx="16" cy="16" r="15" fill="#1ed760" /><path d="M8 12c6-2 11-1.500 16 1M9 17c5-1.500 10-1 14 1M10 22c4-1 8-.7 12 1" stroke="#111" strokeWidth="2.500" strokeLinecap="round" /></svg>
        </TaskIcon>
        <TaskIcon>
          <svg width="32" height="32" viewBox="0 0 32 32"><circle cx="16" cy="16" r="15" fill="#0f6fc4" /><path d="M2 14C4 5 12 1 18 1c7 0 13 6 13 13 0 4-3 6-6 6-2 0-5-1-5-3 0-3 1-3 0-5-3-4-12-3-18 2z" fill="#35c8a4" /><path d="M14 14a6 6 0 0 0 2 12c3 0 5 0 8-2-6 5-15 1-10-10z" fill="#8fdcf0" /></svg>
        </TaskIcon>
        <TaskIcon>
          <svg width="32" height="32" viewBox="0 0 32 32"><path d="M2 5h10l3 4h15v6H2z" fill="#e0a020" /><rect x="2" y="12" width="28" height="17" rx="1" fill="#f8c846" /><rect x="10" y="21" width="12" height="4" fill="#2a86d8" /></svg>
        </TaskIcon>
        <TaskIcon><Chrome /></TaskIcon>
        <TaskIcon>
          <svg width="30" height="32" viewBox="0 0 30 32"><rect x="4" y="2" width="22" height="28" fill="#8fd5e8" /><rect x="4" y="27" width="22" height="4" fill="#a85a32" /><path d="M9 10h12M9 15h12M9 20h12" stroke="#1a5f88" strokeWidth="2" /></svg>
        </TaskIcon>
        <TaskIcon>
          <svg width="32" height="32" viewBox="0 0 32 32"><rect x="9" y="2" width="21" height="28" rx="2" fill="#2f8ae0" /><rect x="9" y="16" width="21" height="14" fill="#1c5bb0" /><rect x="2" y="9" width="15" height="15" rx="2" fill="#1b56a8" /><text x="9.500" y="21" textAnchor="middle" fontSize="11" fontWeight="700" fill="#fff" fontFamily="Liberation Sans">W</text></svg>
        </TaskIcon>
        <TaskIcon>
          <svg width="32" height="32" viewBox="0 0 32 32"><circle cx="17" cy="16" r="14" fill="#f08050" /><path d="M17 2a14 14 0 0 1 14 14H17z" fill="#f4a57f" /><rect x="2" y="9" width="15" height="15" rx="2" fill="#c9421c" /><text x="9.500" y="21" textAnchor="middle" fontSize="11" fontWeight="700" fill="#fff" fontFamily="Liberation Sans">P</text></svg>
        </TaskIcon>
        <TaskIcon>
          <svg width="32" height="32" viewBox="0 0 32 32"><circle cx="16" cy="16" r="15" fill="#5865f2" /><path d="M9 11c4-2 10-2 14 0l2 9c-2 2-3 2-5 2.500l-1-2c-2 .5-4 .5-6 0l-1 2c-2-.5-3-.5-5-2.500z" fill="#fff" /><circle cx="13" cy="16" r="1.800" fill="#5865f2" /><circle cx="19" cy="16" r="1.800" fill="#5865f2" /></svg>
        </TaskIcon>
        <TaskIcon>
          <svg width="30" height="32" viewBox="0 0 30 32"><path d="M21 2l8 4v20l-8 4-13-12-5 4-2-1V11l2-1 5 4z" fill="#9a6fd8" /><path d="M21 9v14l-8-7z" fill="#2a2028" /><path d="M1 11l2-1 5 6-5 6-2-1z" fill="#6f45b0" /></svg>
        </TaskIcon>
        <TaskIcon>
          <svg width="30" height="32" viewBox="0 0 30 32"><path d="M22 1l7 4v22l-7 4-13-12-5 4-3-2V11l3-2 5 4z" fill="#1f9ce4" /><path d="M22 9v14l-8-7z" fill="#1e2127" /><path d="M22 1l7 4v22l-7 4z" fill="#0b7cc4" /></svg>
        </TaskIcon>
        <TaskIcon dot>
          <Chrome />
          <div className="absolute right-[10px] top-[2px] h-[20px] w-[20px] rounded-full bg-gradient-to-b from-[#b9bcc7] via-[#8c6f66] to-[#2d3142]" />
        </TaskIcon>
        <TaskIcon active>
          <svg width="32" height="42" viewBox="0 0 32 42"><rect x="3" y="1" width="26" height="38" rx="6" fill="#1d1d1f" /><circle cx="19" cy="12" r="8.500" fill="#e0140f" /><circle cx="19" cy="12" r="3" fill="#1d1d1f" /><circle cx="11" cy="29" r="5" fill="#eee" /><circle cx="16" cy="28" r="6" fill="#eee" /></svg>
        </TaskIcon>
      </div>
      <div className="ml-auto flex items-center text-[#eee]">
        <ChevronUp size={20} strokeWidth={2} />
        <Keyboard size={22} strokeWidth={1.5} className="ml-[19px]" />
        <div className="ml-[19px] w-[42px] text-center text-[15px] leading-[21px]">
          <div>ENG</div>
          <div>US</div>
        </div>
        <Wifi size={20} strokeWidth={2} className="ml-[15px]" />
        <Volume2 size={20} strokeWidth={1.7} className="ml-[9px]" />
        <svg width="20" height="14" viewBox="0 0 20 14" fill="none" stroke="#eee" strokeWidth="1.500" className="ml-[10px]"><rect x="1" y="1" width="15" height="12" rx="2" /><rect x="3.500" y="3.500" width="6" height="7" fill="#eee" stroke="none" /><path d="M18 5v4" /></svg>
        <div className="ml-[19px] text-right text-[15px] leading-[21px]">
          <div>10:07 AM</div>
          <div>30/11/2024</div>
        </div>
        <Bell size={19} fill="#e3a9ef" strokeWidth={1} className="ml-[10px] mr-[25px] text-[#e3a9ef]" />
      </div>
    </div>
  );
}

export default function App() {
  return (
    <div className="flex h-[1080px] w-[1920px] flex-col overflow-hidden">
      <div className="flex h-[1020px] shrink-0">
        <Studio />
        <Browser />
      </div>
      <Taskbar />
    </div>
  );
}
